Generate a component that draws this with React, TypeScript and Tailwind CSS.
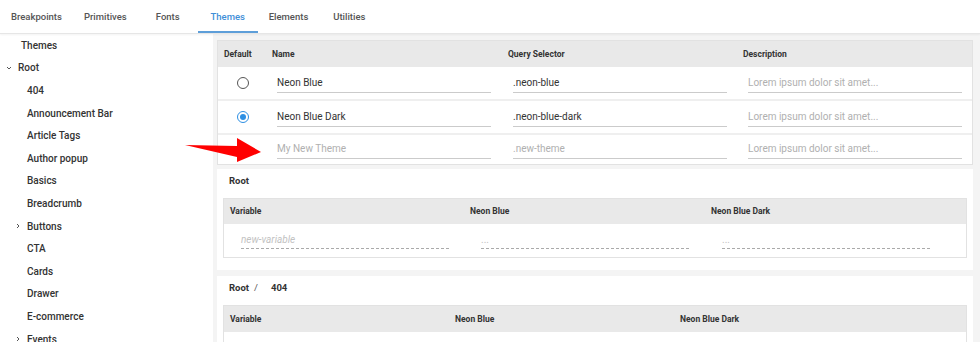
import React from 'react';

const tabs = ['Breakpoints', 'Primitives', 'Fonts', 'Themes', 'Elements', 'Utilities'];

type NavItem = { label: string; depth: number; caret?: 'down' | 'right' };

const navItems: NavItem[] = [
    { label: 'Themes', depth: 0 },
    { label: 'Root', depth: 0, caret: 'down' },
    { label: '404', depth: 1 },
    { label: 'Announcement Bar', depth: 1 },
    { label: 'Article Tags', depth: 1 },
    { label: 'Author popup', depth: 1 },
    { label: 'Basics', depth: 1 },
    { label: 'Breadcrumb', depth: 1 },
    { label: 'Buttons', depth: 1, caret: 'right' },
    { label: 'CTA', depth: 1 },
    { label: 'Cards', depth: 1 },
    { label: 'Drawer', depth: 1 },
    { label: 'E-commerce', depth: 1 },
    { label: 'Events', depth: 1, caret: 'right' },
];

const themes = [
    { name: 'Neon Blue', selector: '.neon-blue', checked: false },
    { name: 'Neon Blue Dark', selector: '.neon-blue-dark', checked: true },
];

function Caret({ dir }: { dir: 'down' | 'right' }) {
    return (
        <svg width="6" height="6" viewBox="0 0 6 6" className="shrink-0">
            {dir === 'down' ? (
                <path d="M1 2 L3 4 L5 2" fill="none" stroke="#555" strokeWidth="1" />
            ) : (
                <path d="M2 1 L4 3 L2 5" fill="none" stroke="#555" strokeWidth="1" />
            )}
        </svg>
    );
}

function Radio({ checked }: { checked: boolean }) {
    return checked ? (
        <span className="w-[12px] h-[12px] rounded-full border-[1.5px] border-[#2d8fe3] flex items-center justify-center">
            <span className="w-[6px] h-[6px] rounded-full bg-[#2d8fe3]" />
        </span>
    ) : (
        <span className="w-[12px] h-[12px] rounded-full border-[1.5px] border-[#555]" />
    );
}

function Field({ value, placeholder }: { value?: string; placeholder?: string }) {
    return (
        <div className="h-[20px] flex items-center border-b-[1.5px] border-[#cbcbcb] text-[10px]">
            {value ? (
                <span className="text-[#333]">{value}</span>
            ) : (
                <span className="text-[#b0b0b0]">{placeholder}</span>
            )}
        </div>
    );
}

function DashedField({ placeholder, italic }: { placeholder: string; italic?: boolean }) {
    return (
        <div
            className={`w-[208px] h-[18px] flex items-center border-b border-dashed border-[#aaa] text-[10px] text-[#c2c2c2] ${
                italic ? 'italic' : ''
            }`}
        >
            {placeholder}
        </div>
    );
}

export default function App() {
    return (
        <div className="relative w-[980px] h-[342px] overflow-hidden bg-white flex flex-col font-['Roboto',sans-serif]">
            {/* top tabs */}
            <div className="h-[34px] shrink-0 flex items-end bg-white border-b border-[#e6e6e6] shadow-[0_1px_2px_rgba(0,0,0,0.05)] z-10">
                {tabs.map((tab) => (
                    <div
                        key={tab}
                        className={`h-full min-w-[60px] px-[11px] pt-[3px] flex items-center justify-center text-[9.5px] font-medium border-b-2 ${
                            tab === 'Themes'
                                ? 'text-[#3f8fd8] border-[#5d9ed9]'
                                : 'text-[#555] border-transparent'
                        }`}
                    >
                        {tab}
                    </div>
                ))}
            </div>

            <div className="flex flex-1 min-h-0">
                {/* sidebar */}
                <div className="w-[213px] shrink-0 bg-white">
                    {navItems.map((item) => (
                        <div
                            key={item.label}
                            className={`h-[22.6px] flex items-center text-[10px] font-medium text-[#333] ${
                                item.depth === 0 ? (item.caret ? 'pl-[6px]' : 'pl-[21px]') : item.caret ? 'pl-[15px]' : 'pl-[27px]'
                            }`}
                        >
                            {item.caret && (
                                <span className="mr-[6px] flex">
                                    <Caret dir={item.caret} />
                                </span>
                            )}
                            {item.label}
                        </div>
                    ))}
                </div>

                {/* main */}
                <div className="flex-1 bg-[#f4f4f4] pl-[4px] pr-[7px] pt-[6px] flex flex-col">
                    {/* themes table */}
                    <div className="border border-[#e2e2e2] bg-white">
                        <div className="h-[26px] bg-[#e9e9e9] grid grid-cols-[49px_236px_235px_1fr] items-center text-[8.5px] font-bold text-[#333]">
                            <div className="pl-[6px]">Default</div>
                            <div className="pl-[5px]">Name</div>
                            <div className="pl-[5px]">Query Selector</div>
                            <div className="pl-[5px]">Description</div>
                        </div>
                        {themes.map((t) => (
                            <div
                                key={t.name}
                                className="h-[34px] grid grid-cols-[49px_236px_235px_1fr] border-b-2 border-[#efefef] pt-[6px]"
                            >
                                <div className="flex justify-center pt-[4px]">
                                    <Radio checked={t.checked} />
                                </div>
                                <div className="pl-[10px] pr-[12px]">
                                    <Field value={t.name} />
                                </div>
                                <div className="pl-[10px] pr-[11px]">
                                    <Field value={t.selector} />
                                </div>
                                <div className="pl-[10px] pr-[10px]">
                                    <Field placeholder="Lorem ipsum dolor sit amet..." />
                                </div>
                            </div>
                        ))}
                        <div className="h-[29px] grid grid-cols-[49px_236px_235px_1fr] pt-[4px]">
                            <div />
                            <div className="pl-[10px] pr-[12px]">
                                <Field placeholder="My New Theme" />
                            </div>
                            <div className="pl-[10px] pr-[11px]">
                                <Field placeholder=".new-theme" />
                            </div>
                            <div className="pl-[10px] pr-[10px]">
                                <Field placeholder="Lorem ipsum dolor sit amet..." />
                            </div>
                        </div>
                    </div>

                    {/* Root */}
                    <div className="mt-[4px] bg-white px-[6px] pb-[12px]">
                        <div className="h-[25px] flex items-center pl-[6px] text-[9.5px] font-bold text-[#333]">
                            Root
                        </div>
                        <div className="mt-[4px] border border-[#e2e2e2]">
                            <div className="h-[25px] bg-[#e9e9e9] grid grid-cols-[240px_241px_1fr] items-center text-[8.5px] font-bold text-[#333]">
                                <div className="pl-[6px]">Variable</div>
                                <div className="pl-[6px]">Neon Blue</div>
                                <div className="pl-[6px]">Neon Blue Dark</div>
                            </div>
                            <div className="h-[33px] grid grid-cols-[240px_241px_1fr] pt-[7px]">
                                <div className="pl-[17px]">
                                    <DashedField placeholder="new-variable" italic />
                                </div>
                                <div className="pl-[17px]">
                                    <DashedField placeholder="..." />
                                </div>
                                <div className="pl-[17px]">
                                    <DashedField placeholder="..." />
                                </div>
                            </div>
                        </div>
                    </div>

                    {/* Root / 404 */}
                    <div className="mt-[6px] bg-white px-[6px] pb-[13px]">
                        <div className="h-[25px] flex items-center pl-[6px] text-[9.5px] font-bold text-[#333]">
                            Root
                            <span className="ml-[5px] font-normal text-[#555]">/</span>
                            <span className="ml-[13px]">404</span>
                        </div>
                        <div className="mt-[4px] border border-[#e2e2e2]">
                            <div className="h-[26px] bg-[#e9e9e9] grid grid-cols-[225px_225px_225px_1fr] items-center text-[8.5px] font-bold text-[#333]">
                                <div className="pl-[6px]">Variable</div>
                                <div className="pl-[6px]">Neon Blue</div>
                                <div className="pl-[6px]">Neon Blue Dark</div>
                                <div />
                            </div>
                            <div className="h-[33px]" />
                        </div>
                    </div>
                </div>
            </div>

            {/* red annotation arrow */}
            <svg
                className="absolute left-[184px] top-[137px] z-20"
                width="80"
                height="27"
                viewBox="0 0 80 27"
            >
                <polygon points="1,8 53,9 53,1 77,15 53,25 53,20" fill="#ff0000" />
            </svg>
        </div>
    );
}
